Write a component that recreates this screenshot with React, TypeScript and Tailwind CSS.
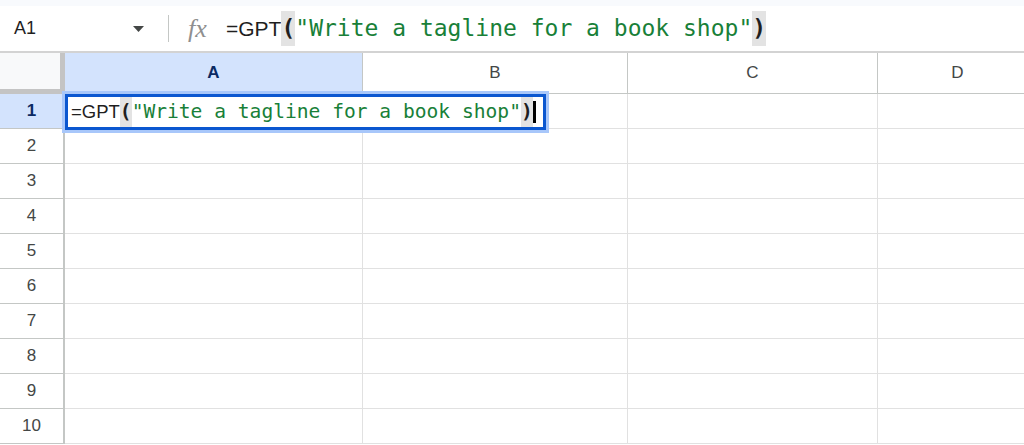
import React from "react";

const SANS = { fontFamily: '"Liberation Sans", Arial, sans-serif' };
const MONO = { fontFamily: '"DejaVu Sans Mono", "Liberation Mono", monospace' };

const cols = [
  { label: "A", w: "w-[298px]", sel: true },
  { label: "B", w: "w-[265px]", sel: false },
  { label: "C", w: "w-[250px]", sel: false },
  { label: "D", w: "w-[160px]", sel: false },
];

function Formula({ big }: { big: boolean }) {
  const sans = big ? "text-[21px]" : "text-[18.5px]";
  const mono = big ? "text-[23px]" : "text-[19.6px]";
  return (
    <div className="flex items-center whitespace-pre">
      <span className={`${sans} text-[#1f1f1f]`} style={SANS}>=GPT</span>
      <span className={`${mono} bg-[#e3e3e3] text-[#1f1f1f] font-bold`} style={MONO}>(</span>
      <span className={`${mono} text-[#188038]`} style={MONO}>"Write a tagline for a book shop"</span>
      <span className={`${mono} bg-[#e3e3e3] text-[#1f1f1f] font-bold`} style={MONO}>)</span>
      {!big && <span className="w-[3px] h-[22px] bg-black" />}
    </div>
  );
}

export default function App() {
  const rows = [1, 2, 3, 4, 5, 6, 7, 8, 9, 10];
  return (
    <div className="w-[1024px] h-[445px] overflow-hidden bg-white relative" style={SANS}>
      <div className="h-[6px] bg-[#f8fafd]" />
      {/* formula bar */}
      <div className="h-[47px] flex items-center border-b-2 border-[#d3d3d3]">
        <div className="w-[168px] flex items-center justify-between pl-[14px] pr-[24px]">
          <span className="text-[18px] text-[#1f1f1f]">A1</span>
          <svg width="11" height="6" viewBox="0 0 11 6"><path d="M0 0h11L5.5 6z" fill="#444746" /></svg>
        </div>
        <div className="w-px h-[27px] bg-[#c4c7c5]" />
        <div className="w-[57px] flex justify-center">
          <span className="text-[26px] italic text-[#8f8f8f]" style={{ fontFamily: '"Liberation Serif", serif' }}>fx</span>
        </div>
        <Formula big />
      </div>
      {/* grid */}
      <div className="flex h-[41px]">
        <div className="w-[65px] shrink-0 flex bg-[#f8f9fa] border-b-[5px] border-[#c4c4c4]">
          <div className="flex-1" />
          <div className="w-[5px] bg-[#c4c4c4]" />
        </div>
        {cols.map((c) => (
          <div
            key={c.label}
            className={`${c.w} shrink-0 flex items-center justify-center border-r border-b border-[#c4c7c5] text-[17px] ${
              c.sel ? "bg-[#d3e3fd] text-[#0b2a63] font-bold" : "bg-white text-[#444746]"
            }`}
          >
            {c.label}
          </div>
        ))}
      </div>
      {rows.map((r) => (
        <div key={r} className="flex h-[35px]">
          <div
            className={`w-[65px] shrink-0 flex items-center justify-center border-r-2 border-b border-[#c4c7c5] text-[17px] ${
              r === 1 ? "bg-[#d3e3fd] text-[#0b2a63] font-bold" : "bg-white text-[#444746]"
            }`}
          >
            {r}
          </div>
          {cols.map((c) => (
            <div key={c.label} className={`${c.w} shrink-0 border-r border-b border-[#e1e1e1]`} />
          ))}
        </div>
      ))}
      {/* active cell editor */}
      <div className="absolute left-[65px] top-[94px] w-[481px] h-[36px] border-[3px] border-[#0b57d0] bg-white shadow-[0_0_0_3px_#a8c7fa] flex items-center pl-[3px]">
        <Formula big={false} />
      </div>
    </div>
  );
}
